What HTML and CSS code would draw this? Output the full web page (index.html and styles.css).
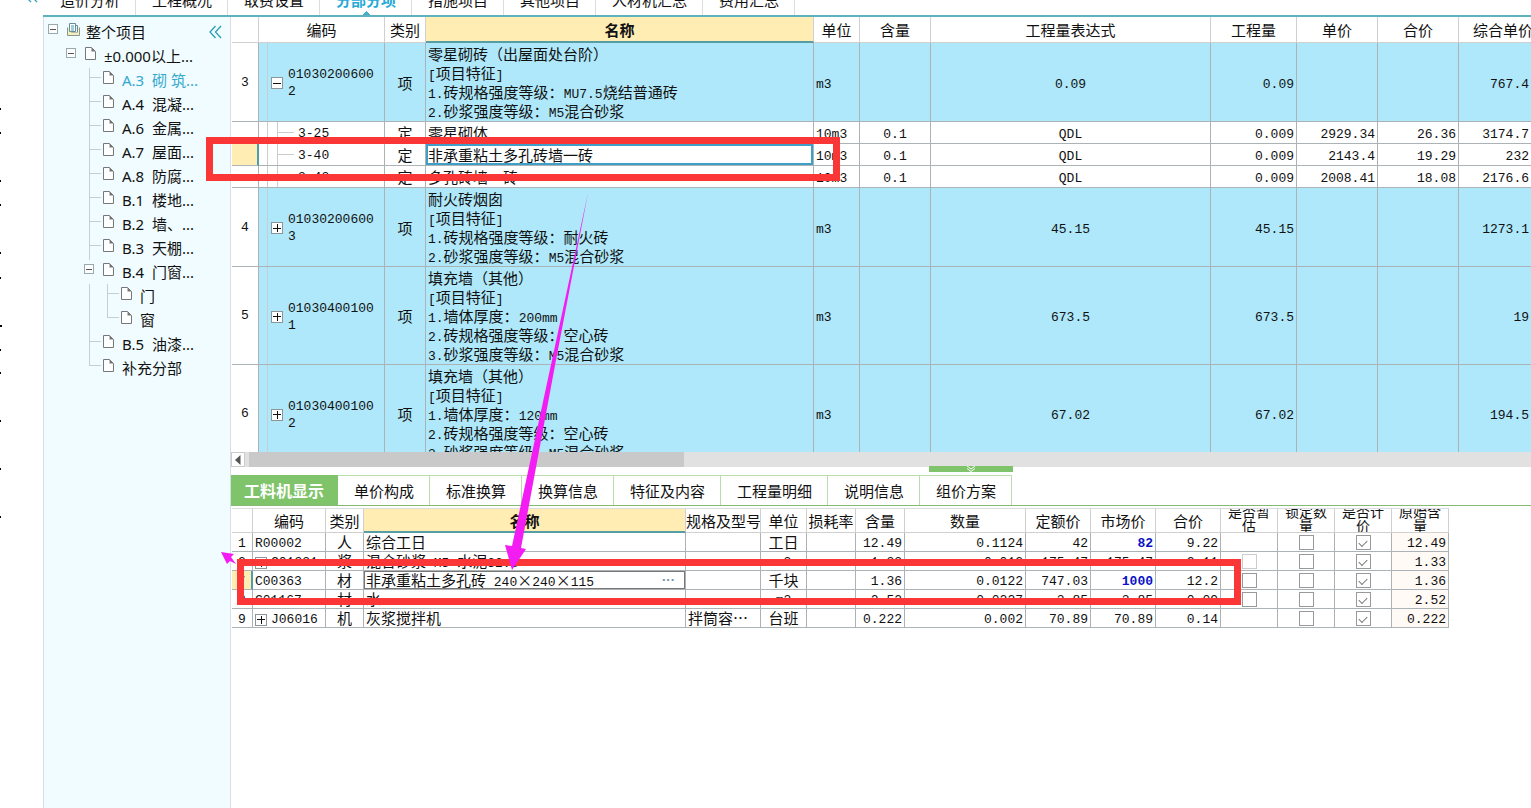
FILE: index.html
```html
<!DOCTYPE html>
<html lang="zh-CN">
<head>
<meta charset="utf-8">
<title>分部分项</title>
<link rel="stylesheet" href="styles.css">
</head>
<body>
<svg class="defs" width="0" height="0" aria-hidden="true">
  <symbol id="page" viewBox="0 0 11 13"><path d="M.5.5h6l4 4v8H.5z" fill="#fcfeff" stroke="#777"/><path d="M6.500.5l4 4h-4z" fill="#777"/></symbol>
</svg>
<div class="shell">
  <div class="rail">
    <svg width="43" height="530" viewBox="0 0 43 530" aria-hidden="true">
      <path d="M27 -2l4 4M33 -2l4 4" stroke="#3aa9bf" stroke-width="1.4"/>
      <path d="M0 109h1M0 133h1M0 181h1M0 205h1M0 253h1M0 278h1M0 326h2M0 350h1M0 373h1M0 421h1M0 469h1M0 517h1" stroke="#000" stroke-width="2"/>
    </svg>
  </div>
  <div class="app">
    <nav class="modules">
      <button>造价分析</button><button>工程概况</button><button>取费设置</button><button class="on">分部分项</button><button>措施项目</button><button>其他项目</button><button>人材机汇总</button><button>费用汇总</button>
    </nav>
    <div class="body">
      <aside class="side">
        <button class="fold" aria-label="收起"><svg width="13" height="14" viewBox="0 0 13 14"><path d="M6.500 1L1 7l5.500 6M12 1L6.500 7l5.500 6" fill="none" stroke="#2b9db3" stroke-width="1.300"/></svg></button>
        <div class="node root"><span class="slot"><button class="tog" aria-label="折叠"></button></span>
          <svg class="book" width="13" height="13" viewBox="0 0 13 13"><path d="M.5 4.500v8h12v-8" fill="#f4efbf" stroke="#8b968e"/><path d="M4.500 2.500h6v7h-6z" fill="#e4f4f7" stroke="#6b8b93"/><path d="M2.500.5h6v8h-6z" fill="#fff" stroke="#6b8b93"/><path d="M4 3h3M4 5h3M4 7h3" stroke="#3aa0b4"/><path d="M1 9.500h11V12H1z" fill="#f4efbf"/></svg>
          <span class="label">整个项目</span></div>
        <ul class="tree">
          <li><div class="node"><span class="slot"><button class="tog" aria-label="折叠"></button></span><svg class="pg"><use href="#page"/></svg><span class="label">±0.000以上...</span></div>
            <ul>
              <li><div class="node"><span class="slot arm"></span><svg class="pg"><use href="#page"/></svg><span class="label cur">A.3&nbsp; 砌 筑...</span></div></li>
              <li><div class="node"><span class="slot arm"></span><svg class="pg"><use href="#page"/></svg><span class="label">A.4&nbsp; 混凝...</span></div></li>
              <li><div class="node"><span class="slot arm"></span><svg class="pg"><use href="#page"/></svg><span class="label">A.6&nbsp; 金属...</span></div></li>
              <li><div class="node"><span class="slot arm"></span><svg class="pg"><use href="#page"/></svg><span class="label">A.7&nbsp; 屋面...</span></div></li>
              <li><div class="node"><span class="slot arm"></span><svg class="pg"><use href="#page"/></svg><span class="label">A.8&nbsp; 防腐...</span></div></li>
              <li><div class="node"><span class="slot arm"></span><svg class="pg"><use href="#page"/></svg><span class="label">B.1&nbsp; 楼地...</span></div></li>
              <li><div class="node"><span class="slot arm"></span><svg class="pg"><use href="#page"/></svg><span class="label">B.2&nbsp; 墙、...</span></div></li>
              <li><div class="node"><span class="slot arm"></span><svg class="pg"><use href="#page"/></svg><span class="label">B.3&nbsp; 天棚...</span></div></li>
              <li class="open"><div class="node"><span class="slot"><button class="tog" aria-label="折叠"></button></span><svg class="pg"><use href="#page"/></svg><span class="label">B.4&nbsp; 门窗...</span></div>
                <ul>
                  <li><div class="node"><span class="slot arm"></span><svg class="pg"><use href="#page"/></svg><span class="label">门</span></div></li>
                  <li><div class="node"><span class="slot arm end"></span><svg class="pg"><use href="#page"/></svg><span class="label">窗</span></div></li>
                </ul></li>
              <li><div class="node"><span class="slot arm"></span><svg class="pg"><use href="#page"/></svg><span class="label">B.5&nbsp; 油漆...</span></div></li>
              <li><div class="node"><span class="slot arm end"></span><svg class="pg"><use href="#page"/></svg><span class="label">补充分部</span></div></li>
            </ul></li>
        </ul>
      </aside>
      <main class="main">
        <div class="upper">
          <table class="grid bill">
            <colgroup><col class="w27"><col class="w126"><col class="w41"><col><col class="w46"><col class="w71"><col class="w280"><col class="w86"><col class="w81"><col class="w81"><col class="w89"></colgroup>
            <thead><tr><th></th><th>编码</th><th>类别</th><th class="pick">名称</th><th>单位</th><th>含量</th><th>工程量表达式</th><th>工程量</th><th>单价</th><th>合价</th><th>综合单价</th></tr></thead>
            <tbody>
              <tr class="item"><td class="no">3</td><td class="code"><div class="cell"><button class="box minus" aria-label="折叠"></button><span class="id">010302006002</span></div></td><td class="c">项</td><td class="name">零星砌砖（出屋面处台阶）<br><span class="n">[</span>项目特征<span class="n">]</span><br><span class="n">1.</span>砖规格强度等级：<span class="n">MU7.5</span>烧结普通砖<br><span class="n">2.</span>砂浆强度等级：<span class="n">M5</span>混合砂浆</td><td class="u">m3</td><td></td><td class="m">0.09</td><td class="r">0.09</td><td></td><td></td><td class="r">767.4</td></tr>
              <tr><td class="no"></td><td class="code sub"><span class="id">3-25</span></td><td class="c">定</td><td class="name">零星砌体</td><td class="u">10m3</td><td class="m">0.1</td><td class="m">QDL</td><td class="r">0.009</td><td class="r">2929.34</td><td class="r">26.36</td><td class="r">3174.7</td></tr>
              <tr><td class="no here"></td><td class="code sub"><span class="id">3-40</span></td><td class="c">定</td><td class="name focus">非承重粘土多孔砖墙一砖</td><td class="u">10m3</td><td class="m">0.1</td><td class="m">QDL</td><td class="r">0.009</td><td class="r">2143.4</td><td class="r">19.29</td><td class="r">232</td></tr>
              <tr><td class="no"></td><td class="code sub"><span class="id">3-43</span></td><td class="c">定</td><td class="name">多孔砖墙一砖</td><td class="u">10m3</td><td class="m">0.1</td><td class="m">QDL</td><td class="r">0.009</td><td class="r">2008.41</td><td class="r">18.08</td><td class="r">2176.6</td></tr>
              <tr class="item"><td class="no">4</td><td class="code"><div class="cell"><button class="box" aria-label="展开"></button><span class="id">010302006003</span></div></td><td class="c">项</td><td class="name">耐火砖烟囱<br><span class="n">[</span>项目特征<span class="n">]</span><br><span class="n">1.</span>砖规格强度等级：耐火砖<br><span class="n">2.</span>砂浆强度等级：<span class="n">M5</span>混合砂浆</td><td class="u">m3</td><td></td><td class="m">45.15</td><td class="r">45.15</td><td></td><td></td><td class="r">1273.1</td></tr>
              <tr class="item"><td class="no">5</td><td class="code"><div class="cell"><button class="box" aria-label="展开"></button><span class="id">010304001001</span></div></td><td class="c">项</td><td class="name">填充墙（其他）<br><span class="n">[</span>项目特征<span class="n">]</span><br><span class="n">1.</span>墙体厚度：<span class="n">200mm</span><br><span class="n">2.</span>砖规格强度等级：空心砖<br><span class="n">3.</span>砂浆强度等级：<span class="n">M5</span>混合砂浆</td><td class="u">m3</td><td></td><td class="m">673.5</td><td class="r">673.5</td><td></td><td></td><td class="r">19</td></tr>
              <tr class="item"><td class="no">6</td><td class="code"><div class="cell"><button class="box" aria-label="展开"></button><span class="id">010304001002</span></div></td><td class="c">项</td><td class="name">填充墙（其他）<br><span class="n">[</span>项目特征<span class="n">]</span><br><span class="n">1.</span>墙体厚度：<span class="n">120mm</span><br><span class="n">2.</span>砖规格强度等级：空心砖<br><span class="n">3.</span>砂浆强度等级：<span class="n">M5</span>混合砂浆</td><td class="u">m3</td><td></td><td class="m">67.02</td><td class="r">67.02</td><td></td><td></td><td class="r">194.5</td></tr>
            </tbody>
          </table>
        </div>
        <div class="scroll"><button class="left" aria-label="向左"><svg width="6" height="10" viewBox="0 0 6 10"><path d="M5.500 0v10L0 5z" fill="#555"/></svg></button><div class="thumb"></div></div>
        <button class="handle" aria-label="收起面板"><svg width="10" height="6" viewBox="0 0 10 6"><path d="M1 0l4 3 4-3M1 2.500l4 3 4-3" fill="none" stroke="#fff"/></svg></button>
        <div class="tabs"><button class="on">工料机显示</button><button>单价构成</button><button>标准换算</button><button>换算信息</button><button>特征及内容</button><button>工程量明细</button><button>说明信息</button><button>组价方案</button></div>
        <table class="grid parts">
          <colgroup><col class="w21"><col class="w73"><col class="w38"><col class="w322"><col class="w75"><col class="w46"><col class="w49"><col class="w49"><col class="w121"><col class="w65"><col class="w65"><col class="w65"><col class="w57"><col class="w57"><col class="w57"><col class="w57"></colgroup>
          <thead><tr><th></th><th>编码</th><th>类别</th><th class="pick">名称</th><th>规格及型号</th><th>单位</th><th>损耗率</th><th>含量</th><th>数量</th><th>定额价</th><th>市场价</th><th>合价</th><th><div class="two">是否暂<br>估</div></th><th><div class="two">锁定数<br>量</div></th><th><div class="two">是否计<br>价</div></th><th><div class="two">原始含<br>量</div></th></tr></thead>
          <tbody>
            <tr><td class="no">1</td><td class="pid">R00002</td><td class="c">人</td><td class="name">综合工日</td><td></td><td class="c">工日</td><td></td><td class="r">12.49</td><td class="r">0.1124</td><td class="r">42</td><td class="r set">82</td><td class="r">9.22</td><td></td><td class="k"><input type="checkbox" aria-label="锁定数量"></td><td class="k"><input type="checkbox" aria-label="是否计价" checked></td><td class="r raw">12.49</td></tr>
            <tr><td class="no">2</td><td class="pid"><div class="cell"><button class="box" aria-label="展开"></button>C01331</div></td><td class="c">浆</td><td class="name">混合砂浆<span class="n"> M5 </span>水泥<span class="n">32.5</span></td><td></td><td class="m">m3</td><td></td><td class="r">1.33</td><td class="r">0.012</td><td class="r">175.47</td><td class="r">175.47</td><td class="r">2.11</td><td class="k"><input type="checkbox" aria-label="是否暂估" disabled></td><td class="k"><input type="checkbox" aria-label="锁定数量"></td><td class="k"><input type="checkbox" aria-label="是否计价" checked></td><td class="r raw">1.33</td></tr>
            <tr><td class="no here">7</td><td class="pid">C00363</td><td class="c">材</td><td class="name edit"><div class="cell"><span>非承重粘土多孔砖<span class="n"> 240</span>×<span class="n">240</span>×<span class="n">115</span></span><button class="more" aria-label="更多">···</button></div></td><td></td><td class="c">千块</td><td></td><td class="r">1.36</td><td class="r">0.0122</td><td class="r">747.03</td><td class="r set">1000</td><td class="r">12.2</td><td class="k"><input type="checkbox" aria-label="是否暂估"></td><td class="k"><input type="checkbox" aria-label="锁定数量"></td><td class="k"><input type="checkbox" aria-label="是否计价" checked></td><td class="r raw">1.36</td></tr>
            <tr><td class="no">8</td><td class="pid">C01167</td><td class="c">材</td><td class="name">水</td><td></td><td class="m">m3</td><td></td><td class="r">2.52</td><td class="r">0.0227</td><td class="r">3.85</td><td class="r">3.85</td><td class="r">0.09</td><td class="k"><input type="checkbox" aria-label="是否暂估"></td><td class="k"><input type="checkbox" aria-label="锁定数量"></td><td class="k"><input type="checkbox" aria-label="是否计价" checked></td><td class="r raw">2.52</td></tr>
            <tr><td class="no">9</td><td class="pid"><div class="cell"><button class="box" aria-label="展开"></button>J06016</div></td><td class="c">机</td><td class="name">灰浆搅拌机</td><td class="name">拌筒容⋯</td><td class="c">台班</td><td></td><td class="r">0.222</td><td class="r">0.002</td><td class="r">70.89</td><td class="r">70.89</td><td class="r">0.14</td><td></td><td class="k"><input type="checkbox" aria-label="锁定数量"></td><td class="k"><input type="checkbox" aria-label="是否计价" checked></td><td class="r raw">0.222</td></tr>
          </tbody>
        </table>
      </main>
    </div>
  </div>
</div>
<svg class="marks" width="1300" height="640" viewBox="0 0 1300 640" aria-hidden="true">
  <path d="M209.500 140.500h627v37h-627zM240.500 562.500h997v39h-997z" fill="none" stroke="#fb3636" stroke-width="7"/>
  <path d="M588 193L556 360L521 548L526 549L512 570L505 545L512 546L552 360Z" fill="#f31df3"/>
  <path d="M221 552l13 2-3 3 5 7-6-3-3 3z" fill="#f31df3"/>
</svg>
</body>
</html>
```
FILE: styles.css
```css
* { box-sizing: border-box; }
body { margin: 0; background: #fff; color: #111; font: 15px/19px "Noto Sans CJK SC", sans-serif; overflow: hidden; }
button { margin: 0; padding: 0; border: 0; background: none; color: inherit; font: inherit; flex: none; }
svg { display: block; flex: none; }
.defs { position: absolute; }
.shell { display: flex; height: 100vh; }
.rail { width: 43px; flex: none; overflow: hidden; }
.app { flex: 1; min-width: 0; display: flex; flex-direction: column; }

.modules { display: flex; align-items: flex-end; height: 17px; flex: none; overflow: hidden; border-bottom: 2px solid #5cb3c0; padding-left: 1px; }
.modules button { height: 30px; padding: 0 15px 0 16px; border-right: 1px solid #ddd; line-height: 30px; }
.modules .on { color: #27a9d6; font-weight: bold; background: conic-gradient(from 135deg at 50% 0, #45aec9 90deg, transparent 0) center bottom / 8px 4px no-repeat; }

.body { flex: 1; min-height: 0; display: flex; }
.side { width: 188px; flex: none; position: relative; padding-top: 3px; background: #f0fcff; border: solid #d5dfe1; border-width: 0 1px; font-family: "Noto Sans", "Noto Sans CJK SC", sans-serif; }
.fold { position: absolute; right: 8px; top: 8px; }
.side ul { list-style: none; margin: 0; padding: 0 0 0 18px; }
.node { display: flex; align-items: flex-start; height: 24px; }
.slot { width: 23px; height: 24px; flex: none; padding: 4px 0 0 4px; }
.tog { display: block; width: 10px; height: 10px; border: 1px solid #98a9ad; background: linear-gradient(#555, #555) center / 6px 1px no-repeat #fff; }
.arm { background: linear-gradient(#c5ced0, #c5ced0) 9px 0 / 1px 100% no-repeat, linear-gradient(#c5ced0, #c5ced0) 9px 9px / 12px 1px no-repeat; }
.arm.end { background-size: 1px 9px, 12px 1px; }
.open > ul { background: linear-gradient(#c5ced0, #c5ced0) 9px 0 / 1px 100% no-repeat; }
.pg { width: 11px; height: 13px; margin-top: 3px; }
.book { margin-top: 3px; }
.label { margin-left: 8px; line-height: 24px; white-space: nowrap; }
.root .label { margin-left: 6px; }
.cur { color: #35a9cc; }

.main { flex: 1; min-width: 0; display: flex; flex-direction: column; align-items: stretch; }
.upper { height: 435px; flex: none; overflow: hidden; padding-left: 1px; }
.grid { table-layout: fixed; border-collapse: separate; border-spacing: 0; }
.grid th, .grid td { padding: 1px 2px; border: solid #abb3b6; border-width: 0 1px 1px 0; white-space: nowrap; overflow: hidden; }
.grid th { font-weight: normal; border-color: #d0d0d0; }
.grid .pick { background: #ffedb3; font-weight: bold; border-bottom: 2px solid #579da5; }
.bill { width: calc(100% + 17px); }
.bill th { height: 26px; }
.bill tbody tr { height: 22px; }
.w21 { width: 21px; } .w27 { width: 27px; } .w38 { width: 38px; } .w41 { width: 41px; } .w46 { width: 46px; }
.w49 { width: 49px; } .w57 { width: 57px; } .w65 { width: 65px; } .w71 { width: 71px; } .w73 { width: 73px; }
.w75 { width: 75px; } .w81 { width: 81px; } .w86 { width: 86px; } .w89 { width: 89px; } .w121 { width: 121px; }
.w126 { width: 126px; } .w280 { width: 280px; } .w322 { width: 322px; }
.item td { background-color: #aee8fa; }
.grid .no { background-color: #fff; text-align: center; padding: 1px 0; }
.grid .here { background-color: #ffedb3; border-right: 2px solid #4d9ea8; }
.no, .id, .n, .pid, .u, .m, .r { font-family: "Liberation Mono", "Noto Sans CJK SC", monospace; font-size: 13px; }
.n { line-height: 1; white-space: pre; }
.c, .m { text-align: center; }
.r { text-align: right; }
.cell { display: flex; align-items: center; }
.bill .u, .bill .m, .bill .r { padding-top: 4px; padding-bottom: 0; line-height: 17px; }
.bill .r:last-child { padding-right: 18px; }
.bill .code { padding: 2px 0 0; background-image: linear-gradient(#c8ced0, #c8ced0); background-size: 1px 100%; background-position: 8px 0; background-repeat: no-repeat; }
.code .cell { padding-left: 12px; gap: 5px; }
.code .cell .id { width: 92px; line-height: 17px; white-space: normal; word-break: break-all; }
.bill .sub { padding-left: 39px; background-image: linear-gradient(#ccc, #ccc), linear-gradient(#ccc, #ccc), linear-gradient(#ccc, #ccc); background-size: 1px 100%, 1px 100%, 17px 1px; background-position: 8px 0, 18px 0, 18px 10px; }
.sub .id { display: block; }
.box { width: 12px; height: 12px; border: 1px solid #8d9599; background: linear-gradient(#111, #111) center / 8px 1px no-repeat, linear-gradient(#111, #111) center / 1px 8px no-repeat, #fff; }
.box.minus { background: linear-gradient(#111, #111) center / 8px 1px no-repeat, #fff; }
.focus { box-shadow: inset 0 0 0 2px #409fc6; }

.scroll { display: flex; height: 15px; flex: none; background: #e1e1e1; }
.left { width: 14px; display: grid; place-items: center; background: #fff; border: 1px solid #ccc; margin-right: 4px; }
.thumb { width: 435px; background: #c9c9c9; }
.handle { width: 84px; height: 6px; margin: -1px 0 3px 698px; display: grid; place-items: center; background: #7fc36a; }
.tabs { display: flex; height: 31px; flex: none; border-bottom: 1px solid #86ba73; }
.tabs button { padding: 0 15px 0 16px; border: solid #b9ddae; border-width: 1px 1px 0 0; }
.tabs .on { padding: 0 13px; border-color: #7fc36a; background: #7fc36a; color: #fff; font-size: 16px; font-weight: bold; }

.parts { width: 1217px; margin: 2px 0 0 1px; }
.parts th { height: 25px; padding: 0; border-top: 1px solid #ddd; }
.parts td { height: 19px; padding: 0 2px; line-height: 18px; }
.parts .no, .parts .pid, .parts .m, .parts .r { padding-top: 3px; padding-bottom: 0; line-height: 15px; }
.parts .no { padding-left: 0; padding-right: 0; }
.pid .cell { gap: 4px; }
.two { height: 23px; font-size: 14px; line-height: 14px; display: flex; align-items: flex-end; justify-content: center; overflow: hidden; }
.parts .set { color: #0a10c8; font-weight: bold; }
.raw { background: #fffaf5; }
.edit { box-shadow: inset 0 0 0 1px #777; }
.edit .cell { justify-content: space-between; padding-right: 8px; }
.edit .cell > span { height: 18px; }
.more { font: bold 13px/14px "Liberation Sans", sans-serif; color: #6f8fb0; }
.parts .k { text-align: center; padding: 0; line-height: 0; vertical-align: middle; }
.k input { appearance: none; width: 15px; height: 15px; margin: 0; border: 1px solid #999; background: #fff; vertical-align: middle; display: inline-grid; place-items: center; }
.k input:disabled { border-color: #ccc; }
.k input:checked::after { content: ""; width: 7px; height: 4px; border: solid #777; border-width: 0 0 1px 1px; transform: rotate(-45deg); }
.marks { position: absolute; left: 0; top: 0; pointer-events: none; }
```
